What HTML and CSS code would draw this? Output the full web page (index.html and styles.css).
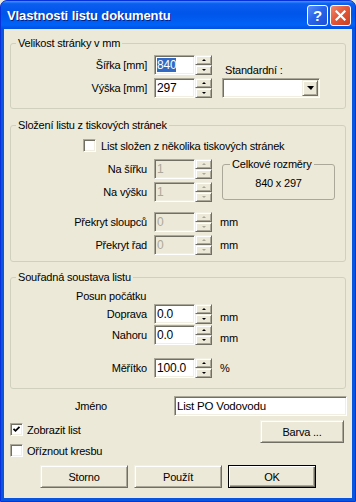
FILE: index.html
```html
<!DOCTYPE html>
<html lang="cs">
<head>
    <meta charset="UTF-8">
    <title>Vlastnosti listu dokumentu</title>
    <link rel="stylesheet" href="styles.css">
</head>
<body>
    <div class="window">
        <div class="titlebar">
            <span class="title">Vlastnosti listu dokumentu</span>
            <div class="caption-buttons">
                <span class="cap-btn help">?</span>
                <span class="cap-btn close">
                    <svg width="11" height="11" viewBox="0 0 11 11"><path d="M1.5 1.5 L9.5 9.5 M9.5 1.5 L1.5 9.5" stroke="#fff" stroke-width="2.2" stroke-linecap="square"/></svg>
                </span>
            </div>
        </div>

        <div class="client">
            <fieldset class="group g-size">
                <legend>Velikost stránky v mm</legend>
                <div class="size-body">
                    <div class="fields">
                        <div class="row">
                            <span class="lbl">Šířka [mm]</span>
                            <div class="edit sunken"><span class="sel">840</span></div>
                            <div class="spin"><span class="spin-btn up"></span><span class="spin-btn down"></span></div>
                        </div>
                        <div class="row">
                            <span class="lbl">Výška [mm]</span>
                            <div class="edit sunken">297</div>
                            <div class="spin"><span class="spin-btn up"></span><span class="spin-btn down"></span></div>
                        </div>
                    </div>
                    <div class="std">
                        <div class="std-label">Standardní :</div>
                        <div class="combo sunken"><span class="combo-btn"></span></div>
                    </div>
                </div>
            </fieldset>

            <fieldset class="group g-multi">
                <legend>Složení listu z tiskových stránek</legend>
                <div class="check-row multi-check">
                    <span class="checkbox sunken"></span>
                    <span>List složen z několika tiskových stránek</span>
                </div>
                <div class="multi">
                    <div class="fields">
                        <div class="row">
                            <span class="lbl">Na šířku</span>
                            <div class="edit sunken disabled">1</div>
                            <div class="spin disabled"><span class="spin-btn up"></span><span class="spin-btn down"></span></div>
                        </div>
                        <div class="row">
                            <span class="lbl">Na výšku</span>
                            <div class="edit sunken disabled">1</div>
                            <div class="spin disabled"><span class="spin-btn up"></span><span class="spin-btn down"></span></div>
                        </div>
                    </div>
                    <fieldset class="total">
                        <legend>Celkové rozměry</legend>
                        <div class="total-value">840 x 297</div>
                    </fieldset>
                </div>
                <div class="fields overlap">
                    <div class="row">
                        <span class="lbl">Překryt sloupců</span>
                        <div class="edit sunken disabled">0</div>
                        <div class="spin disabled"><span class="spin-btn up"></span><span class="spin-btn down"></span></div>
                        <span class="unit">mm</span>
                    </div>
                    <div class="row">
                        <span class="lbl">Překryt řad</span>
                        <div class="edit sunken disabled">0</div>
                        <div class="spin disabled"><span class="spin-btn up"></span><span class="spin-btn down"></span></div>
                        <span class="unit">mm</span>
                    </div>
                </div>
            </fieldset>

            <fieldset class="group g-coords">
                <legend>Souřadná soustava listu</legend>
                <div class="sub-title">Posun počátku</div>
                <div class="fields shift">
                    <div class="row">
                        <span class="lbl">Doprava</span>
                        <div class="edit sunken">0.0</div>
                        <div class="spin"><span class="spin-btn up"></span><span class="spin-btn down"></span></div>
                        <span class="unit low">mm</span>
                    </div>
                    <div class="row">
                        <span class="lbl">Nahoru</span>
                        <div class="edit sunken">0.0</div>
                        <div class="spin"><span class="spin-btn up"></span><span class="spin-btn down"></span></div>
                        <span class="unit low">mm</span>
                    </div>
                </div>
                <div class="row scale">
                    <span class="lbl">Měřítko</span>
                    <div class="edit sunken">100.0</div>
                    <div class="spin"><span class="spin-btn up"></span><span class="spin-btn down"></span></div>
                    <span class="unit">%</span>
                </div>
            </fieldset>

            <div class="name-row">
                <span class="name-label">Jméno</span>
                <div class="edit sunken wide">List PO Vodovodu</div>
            </div>

            <div class="options">
                <div class="checks">
                    <div class="check-row">
                        <span class="checkbox sunken">
                            <svg width="9" height="9" viewBox="0 0 9 9"><path d="M1.5 3.8 L3.5 5.8 L7.5 1.8" fill="none" stroke="#000" stroke-width="1.8"/></svg>
                        </span>
                        <span>Zobrazit list</span>
                    </div>
                    <div class="check-row">
                        <span class="checkbox sunken"></span>
                        <span>Oříznout kresbu</span>
                    </div>
                </div>
                <div class="button raised barva">Barva ...</div>
            </div>

            <div class="buttons">
                <div class="button raised">Storno</div>
                <div class="button raised">Použít</div>
                <div class="button default">OK</div>
            </div>
        </div>
    </div>
</body>
</html>
```

FILE: styles.css
```css
* {
    margin: 0;
    padding: 0;
    box-sizing: border-box;
}

body {
    width: 356px;
    height: 502px;
    font-family: "Liberation Sans", Arial, sans-serif;
    font-size: 11px;
    letter-spacing: -0.2px;
    color: #000;
    background: #ece9d8;
}

/* window frame */

.window {
    height: 502px;
    display: flex;
    flex-direction: column;
    background: #0a55e0;
    border: 1px solid #0831d9;
    border-radius: 7px 7px 0 0;
    overflow: hidden;
}

.titlebar {
    height: 28px;
    display: flex;
    align-items: center;
    padding: 0 4px 0 6px;
    background: linear-gradient(#3d95ff 0, #0a5def 10%, #0055ea 45%, #0062f8 85%, #0050e0 100%);
}

.title {
    flex: 1;
    color: #fff;
    font-weight: bold;
    font-size: 13px;
    letter-spacing: -0.1px;
    text-shadow: 1px 1px #0a1e7d;
}

.caption-buttons {
    display: flex;
    gap: 2px;
}

.cap-btn {
    width: 21px;
    height: 21px;
    border: 1px solid #fff;
    border-radius: 3px;
    display: flex;
    align-items: center;
    justify-content: center;
}

.help {
    background: linear-gradient(135deg, #5a8ff5 0%, #2a65e9 45%, #1d50d8 100%);
    color: #fff;
    font-weight: bold;
    font-size: 15px;
    letter-spacing: 0;
}

.close {
    background: linear-gradient(135deg, #f08a6c 0%, #e2593b 45%, #c8401f 100%);
}

.client {
    flex: 1;
    margin: 0 3px 3px;
    background: #ece9d8;
    display: flex;
    flex-direction: column;
}

/* 3d borders */

.sunken {
    border: 1px solid;
    border-color: #aca899 #fff #fff #aca899;
    box-shadow: inset 1px 1px 0 #716f64, inset -1px -1px 0 #f1efe2;
    background: #fff;
}

.raised {
    border: 1px solid;
    border-color: #f1efe2 #716f64 #716f64 #f1efe2;
    box-shadow: inset 1px 1px 0 #fff, inset -1px -1px 0 #aca899;
    background: #ece9d8;
}

/* group boxes */

.group {
    margin: 8px 6px 0;
    border: 1px solid #d0d0bf;
    border-radius: 3px;
    min-width: 0;
}

legend {
    margin-left: 5px;
    padding: 0 2px;
    line-height: 13px;
}

.g-size {
    padding: 5px 0 10px;
}

.g-multi {
    margin-top: 10px;
    padding: 7px 0 6px;
}

.g-coords {
    margin-top: 9px;
    padding: 6px 0 10px;
}

.fields {
    display: flex;
    flex-direction: column;
    gap: 3px;
}

.row {
    display: flex;
    align-items: center;
    height: 20px;
}

.lbl {
    width: 136px;
    margin-right: 7px;
    text-align: right;
    white-space: nowrap;
}

.edit {
    width: 41px;
    height: 20px;
    padding: 0 2px;
    display: flex;
    align-items: center;
    font-size: 12px;
    white-space: nowrap;
}

.edit.disabled {
    background: #ece9d8;
    color: #aca899;
}

.sel {
    background: #316ac5;
    color: #fff;
}

.spin {
    width: 17px;
    height: 20px;
    display: flex;
    flex-direction: column;
}

.spin-btn {
    flex: 1;
    display: flex;
    align-items: center;
    justify-content: center;
    border: 1px solid;
    border-color: #f1efe2 #716f64 #716f64 #f1efe2;
    box-shadow: inset 1px 1px 0 #fff, inset -1px -1px 0 #aca899;
    background: #ece9d8;
}

.spin-btn::after {
    content: "";
    width: 0;
    border-left: 2px solid transparent;
    border-right: 2px solid transparent;
}

.spin-btn.up::after {
    border-bottom: 2px solid #000;
}

.spin-btn.down::after {
    border-top: 2px solid #000;
}

.spin.disabled .spin-btn.up::after {
    border-bottom-color: #aca899;
}

.spin.disabled .spin-btn.down::after {
    border-top-color: #aca899;
}

.unit {
    margin-left: 8px;
}

.unit.low {
    margin-top: 6px;
}

/* page size */

.size-body {
    display: flex;
    align-items: flex-end;
}

.std {
    margin-left: 10px;
}

.std-label {
    padding-left: 3px;
    line-height: 13px;
    margin-bottom: 1px;
}

.combo {
    width: 98px;
    height: 20px;
    display: flex;
    justify-content: flex-end;
    padding: 1px;
}

.combo-btn {
    width: 16px;
    height: 16px;
    display: flex;
    align-items: center;
    justify-content: center;
    border: 1px solid;
    border-color: #f1efe2 #716f64 #716f64 #f1efe2;
    box-shadow: inset 1px 1px 0 #fff, inset -1px -1px 0 #aca899;
    background: #ece9d8;
}

.combo-btn::after {
    content: "";
    width: 0;
    border-left: 4px solid transparent;
    border-right: 3px solid transparent;
    border-top: 4px solid #000;
}

/* multi page */

.check-row {
    display: flex;
    align-items: center;
    gap: 5px;
    height: 13px;
}

.multi-check {
    margin-left: 72px;
}

.checkbox {
    width: 13px;
    height: 13px;
    display: flex;
    align-items: center;
    justify-content: center;
}

.multi {
    display: flex;
    margin-top: 7px;
}

.total {
    margin: -1px 0 0 10px;
    width: 113px;
    height: 42px;
    border: 1px solid #aca899;
    border-radius: 3px;
    padding-top: 6px;
}

.total legend {
    margin-left: 7px;
}

.total-value {
    text-align: center;
    line-height: 13px;
}

.overlap {
    margin-top: 10px;
}

/* coordinates */

.sub-title {
    margin-left: 65px;
    line-height: 13px;
}

.shift {
    margin-top: 1px;
    gap: 1px;
}

.scale {
    margin-top: 13px;
}

/* bottom part */

.name-row {
    display: flex;
    align-items: center;
    margin-top: 7px;
}

.name-label {
    margin-left: 71px;
}

.edit.wide {
    width: 173px;
    margin-left: auto;
    margin-right: 5px;
    font-size: 11.5px;
}

.options {
    display: flex;
    margin-top: 4px;
}

.checks {
    display: flex;
    flex-direction: column;
    gap: 8px;
    padding: 3px 0 0 6px;
}

.checks .check-row {
    gap: 4px;
}

.button {
    width: 88px;
    height: 23px;
    display: flex;
    align-items: center;
    justify-content: center;
}

.barva {
    width: 84px;
    margin-left: auto;
    margin-right: 8px;
}

.buttons {
    display: flex;
    justify-content: center;
    gap: 6px;
    margin: auto 0 10px;
}

.default {
    border: 1px solid #000;
    box-shadow: inset 1px 1px 0 #fff, inset -1px -1px 0 #716f64, inset -2px -2px 0 #aca899;
    background: #ece9d8;
}
```
